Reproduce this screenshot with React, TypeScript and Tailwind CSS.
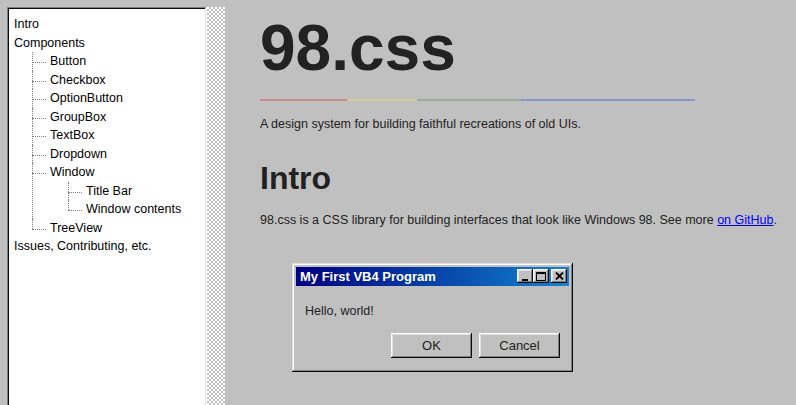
import React from 'react';

type Node = { label: string; children?: Node[] };

const TREE: Node[] = [
  { label: 'Intro' },
  {
    label: 'Components',
    children: [
      { label: 'Button' },
      { label: 'Checkbox' },
      { label: 'OptionButton' },
      { label: 'GroupBox' },
      { label: 'TextBox' },
      { label: 'Dropdown' },
      { label: 'Window', children: [{ label: 'Title Bar' }, { label: 'Window contents' }] },
      { label: 'TreeView' },
    ],
  },
  { label: 'Issues, Contributing, etc.' },
];

function SubTree({ items }: { items: Node[] }) {
  return (
    <ul className="ml-[18px]">
      {items.map((item, i) => {
        const last = i === items.length - 1;
        return (
          <li key={item.label} className="relative pl-[18px]">
            {/* connector lines */}
            <span
              className={`absolute left-0 top-0 border-l border-dotted border-[#808080] ${last ? 'h-[10px]' : 'h-full'}`}
            />
            <span className="absolute left-0 top-[10px] w-[14px] border-t border-dotted border-[#808080]" />
            <div className="leading-[18.5px] whitespace-nowrap">{item.label}</div>
            {item.children && <SubTree items={item.children} />}
          </li>
        );
      })}
    </ul>
  );
}

function Sidebar() {
  return (
    <div className="flex mt-[7px] ml-[7px] h-[420px] shrink-0">
      <div className="w-[200px] bg-white shadow-[inset_-1px_-1px_#ffffff,inset_1px_1px_#808080,inset_-2px_-2px_#dfdfdf,inset_2px_2px_#0a0a0a] pt-[8px] pl-[7px] text-[12.5px] text-black">
        <ul>
          {TREE.map((item) => (
            <li key={item.label}>
              <div className="leading-[18.5px] whitespace-nowrap">{item.label}</div>
              {item.children && <SubTree items={item.children} />}
            </li>
          ))}
        </ul>
      </div>
      <div className="w-[18px] bg-[image:repeating-conic-gradient(#c0c0c0_0%_25%,#ffffff_0%_50%)] bg-[length:4px_4px]" />
    </div>
  );
}

function TitleButton({ children }: { children: React.ReactNode }) {
  return (
    <button className="w-[16px] h-[14px] bg-[#c0c0c0] shadow-[inset_-1px_-1px_#0a0a0a,inset_1px_1px_#ffffff,inset_-2px_-2px_#808080,inset_2px_2px_#dfdfdf] flex items-center justify-center p-0">
      {children}
    </button>
  );
}

function Button({ children }: { children: React.ReactNode }) {
  return (
    <button className="w-[81px] h-[25px] bg-[#c0c0c0] text-[13px] text-[#222] shadow-[inset_-1px_-1px_#0a0a0a,inset_1px_1px_#ffffff,inset_-2px_-2px_#808080,inset_2px_2px_#dfdfdf]">
      {children}
    </button>
  );
}

function Window() {
  return (
    <div className="w-[281px] p-[4px] bg-[#c0c0c0] shadow-[inset_-1px_-1px_#0a0a0a,inset_1px_1px_#dfdfdf,inset_-2px_-2px_#808080,inset_2px_2px_#ffffff]">
      <div className="h-[19px] flex items-center justify-between pl-[4px] pr-[2px] bg-[linear-gradient(90deg,#000080,#1084d0)]">
        <span className="text-white font-bold text-[13px] leading-none">My First VB4 Program</span>
        <div className="flex">
          <TitleButton>
            <svg width="8" height="8" viewBox="0 0 8 8" className="mt-[3px]">
              <rect x="1" y="5" width="6" height="2" fill="#000" />
            </svg>
          </TitleButton>
          <TitleButton>
            <svg width="10" height="9" viewBox="0 0 10 9">
              <rect x="0.5" y="0.5" width="9" height="8" fill="none" stroke="#000" />
              <rect x="0" y="0" width="10" height="2" fill="#000" />
            </svg>
          </TitleButton>
          <span className="w-[2px]" />
          <TitleButton>
            <svg width="9" height="8" viewBox="0 0 9 8">
              <path d="M1 0.5 L8 7.5 M8 0.5 L1 7.5" stroke="#000" strokeWidth="1.8" />
            </svg>
          </TitleButton>
        </div>
      </div>
      <div className="mx-[9px] mt-[9px] mb-[10px] text-[12.5px] text-[#222]">
        <p className="mt-[16px] mb-[13px]">Hello, world!</p>
        <div className="flex justify-end gap-[7px]">
          <Button>OK</Button>
          <Button>Cancel</Button>
        </div>
      </div>
    </div>
  );
}

export default function App() {
  return (
    <div className="h-[405px] w-[796px] overflow-hidden bg-[#c0c0c0] flex font-['Liberation_Sans',Arial,sans-serif]">
      <Sidebar />
      <main className="pl-[35px] text-[#222]">
        <h1 className="text-[64px] font-bold leading-none mt-[16px]">98.css</h1>
        <div className="flex h-[2px] w-[435px] mt-[19px]">
          <span className="w-[87px] bg-[#cc8c8c]" />
          <span className="w-[70px] bg-[#cfcf9e]" />
          <span className="w-[104px] bg-[#9cb09c]" />
          <span className="flex-1 bg-[#8794d0]" />
        </div>
        <p className="text-[12.5px] mt-[14px]">A design system for building faithful recreations of old UIs.</p>
        <h2 className="text-[32px] font-bold leading-none mt-[28px]">Intro</h2>
        <p className="text-[12.5px] mt-[17px] whitespace-nowrap">
          98.css is a CSS library for building interfaces that look like Windows 98. See more{' '}
          <a href="#" className="text-[#0000ff] underline">on GitHub</a>.
        </p>
        <div className="mt-[33px] ml-[32px]">
          <Window />
        </div>
      </main>
    </div>
  );
}
